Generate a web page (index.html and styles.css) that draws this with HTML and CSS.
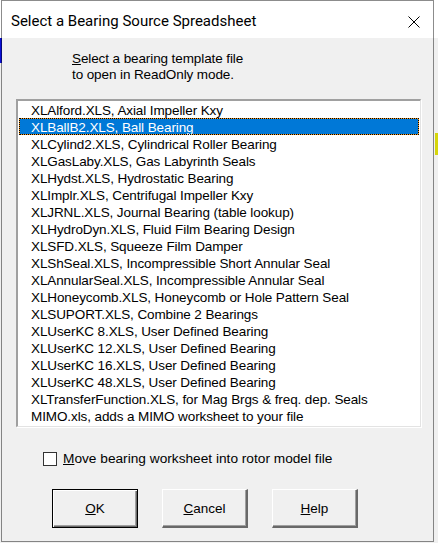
FILE: index.html
```html
<!DOCTYPE html>
<html>
<head>
<meta charset="utf-8">
<title>Select a Bearing Source Spreadsheet</title>
<link rel="stylesheet" href="styles.css">
</head>
<body>
<div class="dialog">
  <div class="titlebar">
    <span class="title">Select a Bearing Source Spreadsheet</span>
    <span class="close"><svg width="12" height="12" viewBox="0 0 12 12"><path d="M0.5 0.5 L11.5 11.5 M11.5 0.5 L0.5 11.5" stroke="#000" stroke-width="1" fill="none"/></svg></span>
  </div>
  <div class="body">
    <p class="prompt"><u>S</u>elect a bearing template file<br>to open in ReadOnly mode.</p>
    <ul class="listbox">
      <li>XLAlford.XLS, Axial Impeller Kxy</li>
      <li class="selected">XLBallB2.XLS, Ball Bearing</li>
      <li>XLCylind2.XLS, Cylindrical Roller Bearing</li>
      <li>XLGasLaby.XLS, Gas Labyrinth Seals</li>
      <li>XLHydst.XLS, Hydrostatic Bearing</li>
      <li>XLImplr.XLS, Centrifugal Impeller Kxy</li>
      <li>XLJRNL.XLS, Journal Bearing (table lookup)</li>
      <li>XLHydroDyn.XLS, Fluid Film Bearing Design</li>
      <li>XLSFD.XLS, Squeeze Film Damper</li>
      <li>XLShSeal.XLS, Incompressible Short Annular Seal</li>
      <li>XLAnnularSeal.XLS, Incompressible Annular Seal</li>
      <li>XLHoneycomb.XLS, Honeycomb or Hole Pattern Seal</li>
      <li>XLSUPORT.XLS, Combine 2 Bearings</li>
      <li>XLUserKC 8.XLS, User Defined Bearing</li>
      <li>XLUserKC 12.XLS, User Defined Bearing</li>
      <li>XLUserKC 16.XLS, User Defined Bearing</li>
      <li>XLUserKC 48.XLS, User Defined Bearing</li>
      <li>XLTransferFunction.XLS, for Mag Brgs &amp; freq. dep. Seals</li>
      <li>MIMO.xls, adds a MIMO worksheet to your file</li>
    </ul>
    <label class="check-row"><span class="checkbox"></span><span><u>M</u>ove bearing worksheet into rotor model file</span></label>
    <div class="buttons">
      <button class="btn default"><u>O</u>K</button>
      <button class="btn"><u>C</u>ancel</button>
      <button class="btn"><u>H</u>elp</button>
    </div>
  </div>
</div>
</body>
</html>
```

FILE: styles.css
```css
* { box-sizing: border-box; }
html, body { margin: 0; padding: 0; }
body {
  width: 438px;
  height: 543px;
  overflow: hidden;
  font-family: "Liberation Sans", Arial, sans-serif;
  font-size: 13.5px;
  color: #000;
  background:
    linear-gradient(#0c10d8, #0c10d8) 0 38px / 2px 25px no-repeat,
    linear-gradient(#d6d60c, #d6d60c) 435px 133px / 3px 22px no-repeat,
    linear-gradient(#fff, #fff) 0 0 / 100% 38px no-repeat,
    #f0f0f0;
}
.dialog {
  margin-left: 1px;
  width: 433px;
  height: 542px;
  border: 1px solid rgba(0, 0, 0, 0.45);
  display: flex;
  flex-direction: column;
}
.titlebar {
  height: 37px;
  background: #fff;
  display: flex;
  align-items: center;
  padding: 3px 13px 0 9px;
}
.title {
  font-family: Roboto, "Liberation Sans", sans-serif;
  font-size: 15px;
}
.close {
  margin-left: auto;
  margin-top: 1px;
  display: flex;
}
.body {
  flex: 1;
  background: #f0f0f0;
  display: flex;
  flex-direction: column;
  align-items: flex-start;
}
.prompt {
  margin: 13px 0 0 70px;
  line-height: 16px;
  letter-spacing: -0.1px;
}
.listbox {
  list-style: none;
  margin: 16px 0 0 14px;
  padding: 0 0 2px;
  width: 405px;
  background: #fff;
  border-style: solid;
  border-width: 2px 1px 1px 2px;
  border-color: #a0a0a0 #e3e3e3 #e3e3e3 #a0a0a0;
  box-shadow: 1px 1px 0 #fff;
}
.listbox li {
  height: 17px;
  margin: 0 1px;
  padding: 3px 0 0 12px;
  line-height: 14px;
  white-space: nowrap;
  letter-spacing: -0.1px;
}
.listbox li.selected {
  background: #0078d7;
  color: #fff;
  outline: 1px dotted #000;
  outline-offset: -1px;
  box-shadow: inset 0 0 0 1px #f59a23;
}
.check-row {
  display: flex;
  align-items: center;
  gap: 6px;
  margin: 23px 0 0 41px;
  line-height: 17px;
  font-size: 13.7px;
}
.checkbox {
  width: 14px;
  height: 14px;
  border: 1px solid #333;
  background: #fff;
}
.buttons {
  display: flex;
  gap: 24px;
  margin: 22px 0 0 50px;
}
.btn {
  width: 86px;
  height: 39px;
  padding: 0;
  font-family: inherit;
  font-size: 13.5px;
  color: #000;
  background: #f0f0f0;
  border-style: solid;
  border-width: 1px 2px 2px 1px;
  border-color: #fff #696969 #696969 #fff;
  box-shadow: inset -1px -1px 0 #a0a0a0;
}
.btn.default {
  border: 1px solid #000;
  box-shadow: inset 1px 1px 0 #fff, inset -1px -1px 0 #696969, inset -2px -2px 0 #a0a0a0;
}
```
